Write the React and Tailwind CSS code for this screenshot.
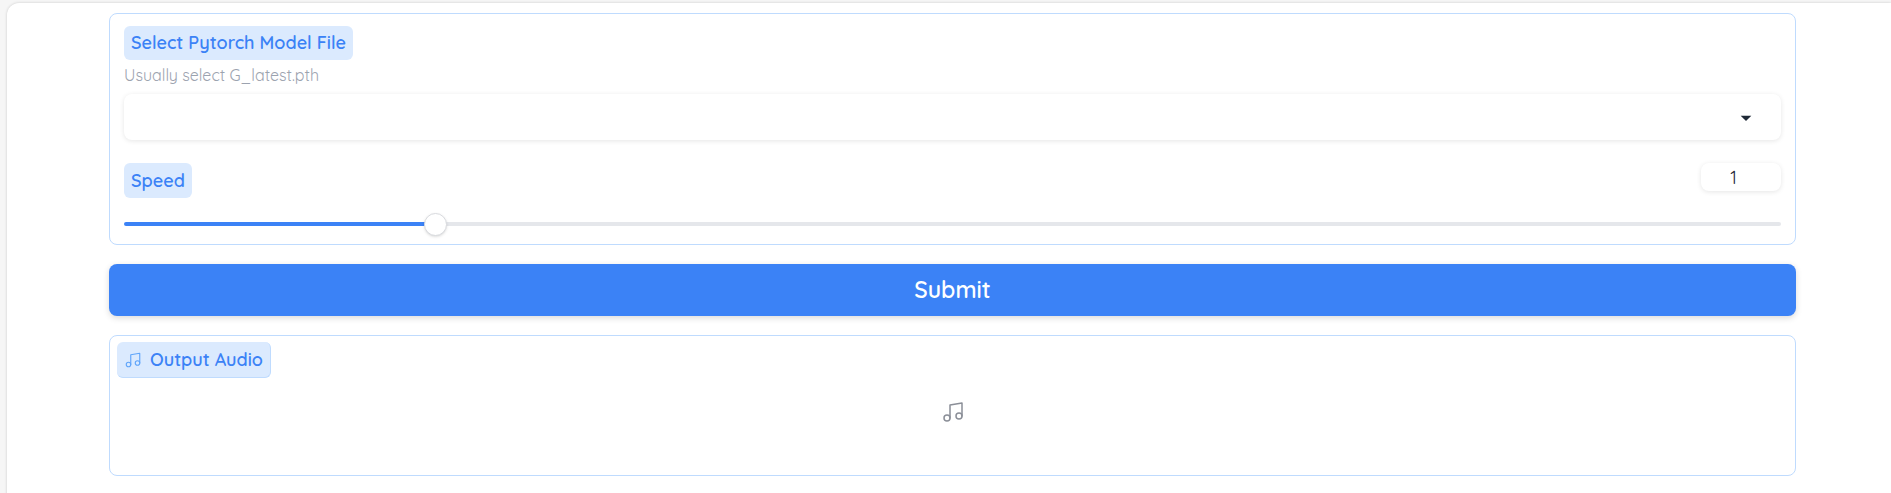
import { useState } from "react";
import { Music } from "lucide-react";

const MIN = 0.1;
const MAX = 5;

const cardClass = "rounded-lg border border-[#bfdbfe] bg-white";
const labelClass =
  "inline-flex items-center rounded-md bg-[#dbeafe] px-[7px] text-[18px] font-semibold text-[#3b82f6]";
const fieldClass = "rounded-lg bg-white shadow-[0_1px_5px_rgba(0,0,0,0.1)] outline-none";

export default function App() {
  const [speed, setSpeed] = useState(1);
  const ratio = (Number(speed) - MIN) / (MAX - MIN);
  const fill = `calc(${ratio * 100}% + ${(0.5 - ratio) * 23}px)`;

  return (
    <div className="min-h-screen overflow-hidden bg-[#f6f6f6] pt-[3px] pl-[7px] font-[Quicksand,'Noto_Sans',sans-serif] text-[#1f2937]">
      <main className="flex min-h-screen flex-col gap-[19px] rounded-tl-xl bg-white pt-2.5 pr-[95px] pb-5 pl-[102px] shadow-[0_0_3px_rgba(0,0,0,0.18)]">
        <section className={`${cardClass} px-3.5 pt-3 pb-[7px]`}>
          <div className="flex flex-col items-start">
            <label htmlFor="model" className={`${labelClass} leading-[34px]`}>
              Select Pytorch Model File
            </label>
            <p id="model-info" className="mt-1 mb-2 text-[16px] leading-[22px] text-[#9ca3af]">
              Usually select G_latest.pth
            </p>
            <div className="relative w-full">
              <select
                id="model"
                aria-describedby="model-info"
                className={`${fieldClass} block h-[46px] w-full appearance-none px-4`}
              >
                <option value=""></option>
              </select>
              <svg
                viewBox="0 0 18 18"
                aria-hidden="true"
                className="pointer-events-none absolute top-[11px] right-[23px] size-6 fill-[#1f2937]"
              >
                <path d="M5 8l4 4 4-4z" />
              </svg>
            </div>
          </div>

          <div className="mt-[23px] flex items-start justify-between">
            <label htmlFor="speed" className={`${labelClass} leading-[35px]`}>
              Speed
            </label>
            <input
              type="number"
              aria-label="Speed value"
              min={MIN}
              max={MAX}
              step="0.1"
              value={speed}
              onChange={(e) => setSpeed(e.target.value)}
              className={`${fieldClass} h-7 w-20 px-2 text-center text-[18px]`}
            />
          </div>
          <input
            id="speed"
            type="range"
            min={MIN}
            max={MAX}
            step="0.1"
            value={speed}
            onChange={(e) => setSpeed(e.target.value)}
            style={{
              backgroundImage: `linear-gradient(to right, #3b82f6 ${fill}, #e5e7eb ${fill})`,
            }}
            className="mt-6 mb-[11px] block h-1 w-full appearance-none rounded-full [&::-webkit-slider-thumb]:size-[23px] [&::-webkit-slider-thumb]:appearance-none [&::-webkit-slider-thumb]:rounded-full [&::-webkit-slider-thumb]:border [&::-webkit-slider-thumb]:border-[#d9dbdf] [&::-webkit-slider-thumb]:bg-white [&::-webkit-slider-thumb]:shadow-sm"
          />
        </section>

        <button
          type="button"
          className="h-[52px] w-full rounded-lg bg-[#3b82f6] text-[23px] font-semibold text-white shadow-[0_2px_6px_rgba(0,0,0,0.15)]"
        >
          Submit
        </button>

        <section className={`${cardClass} flex h-[141px] flex-col items-start px-[7px] pt-[6px]`}>
          <h2 className={`${labelClass} gap-2 border-r border-b border-[#bfdbfe] leading-[35px]`}>
            <Music className="size-[18px] text-[#60a5fa]" strokeWidth={1.5} aria-hidden="true" />
            Output Audio
          </h2>
          <Music
            className="mt-[22px] size-6 self-center text-[#8b8f98]"
            strokeWidth={1.5}
            aria-hidden="true"
          />
        </section>
      </main>
    </div>
  );
}
